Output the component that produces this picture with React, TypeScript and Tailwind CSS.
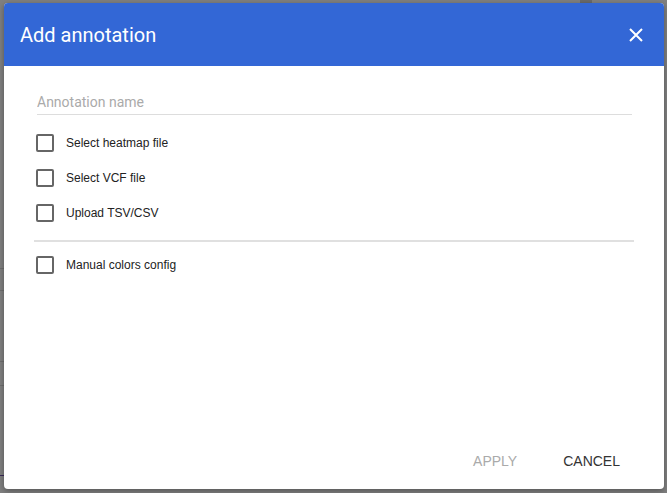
import React from 'react';

const options = ['Select heatmap file', 'Select VCF file', 'Upload TSV/CSV'];

function Check({ label }: { label: string }) {
  return (
    <label className="flex items-center h-[35px] pl-[2px]">
      <span className="w-[18px] h-[18px] border-2 border-[#666] rounded-[2px] shrink-0" />
      <span className="ml-[12px] text-[12px] text-[#222] font-['Liberation_Sans',Arial,sans-serif]">{label}</span>
    </label>
  );
}

export default function App() {
  return (
    <div className="w-[667px] h-[493px] bg-[#808080] relative overflow-hidden flex pl-[4px] pt-[3px] font-['Roboto','Liberation_Sans',sans-serif]">
      {/* dimmed page behind the dialog */}
      <div className="absolute left-0 top-[268px] w-[4px] h-px bg-[#6f6f6f]" />
      <div className="absolute left-0 top-[290px] w-[4px] h-px bg-[#6f6f6f]" />
      <div className="absolute left-0 top-[361px] w-[4px] h-px bg-[#6f6f6f]" />
      <div className="absolute left-0 top-[385px] w-[4px] h-px bg-[#6f6f6f]" />
      <div className="absolute left-0 top-[466px] w-[4px] h-[10px] border-b border-[#3a2a5a]" />
      <div className="absolute left-[580px] top-0 w-[12px] h-[3px] bg-[#6a6a6a]" />

      <div className="relative w-[660px] h-[486px] bg-white rounded-[4px] shadow-[0_2px_6px_rgba(0,0,0,0.35)] flex flex-col overflow-hidden">
        <div className="h-[63px] bg-[#3367d6] flex items-center justify-between pl-[16px] pr-[20px] shrink-0">
          <h2 className="text-[20px] text-white font-normal">Add annotation</h2>
          <svg width="16" height="16" viewBox="0 0 16 16" className="text-white">
            <path d="M2 2 L14 14 M14 2 L2 14" stroke="currentColor" strokeWidth="2" />
          </svg>
        </div>

        <div className="flex-1 px-[30px] pt-[24px]">
          <div className="ml-[3px] mr-[2px] border-b border-[#ddd]">
            <input
              placeholder="Annotation name"
              className="w-full h-[21px] text-[14px] outline-none placeholder:text-[#aaa] text-[#222]"
            />
          </div>
          <div className="mt-[10px]">
            {options.map((o) => (
              <Check key={o} label={o} />
            ))}
          </div>
          <div className="h-[2px] bg-[#e0e0e0] mt-[10px] mb-[5px]" />
          <Check label="Manual colors config" />
        </div>

        <div className="flex justify-end items-center h-[52px] pr-[44px] pb-[4px] gap-[46px] text-[14px] font-['Liberation_Sans',Arial,sans-serif]">
          <button className="text-[#aaa]">APPLY</button>
          <button className="text-[#333]">CANCEL</button>
        </div>
      </div>
    </div>
  );
}
